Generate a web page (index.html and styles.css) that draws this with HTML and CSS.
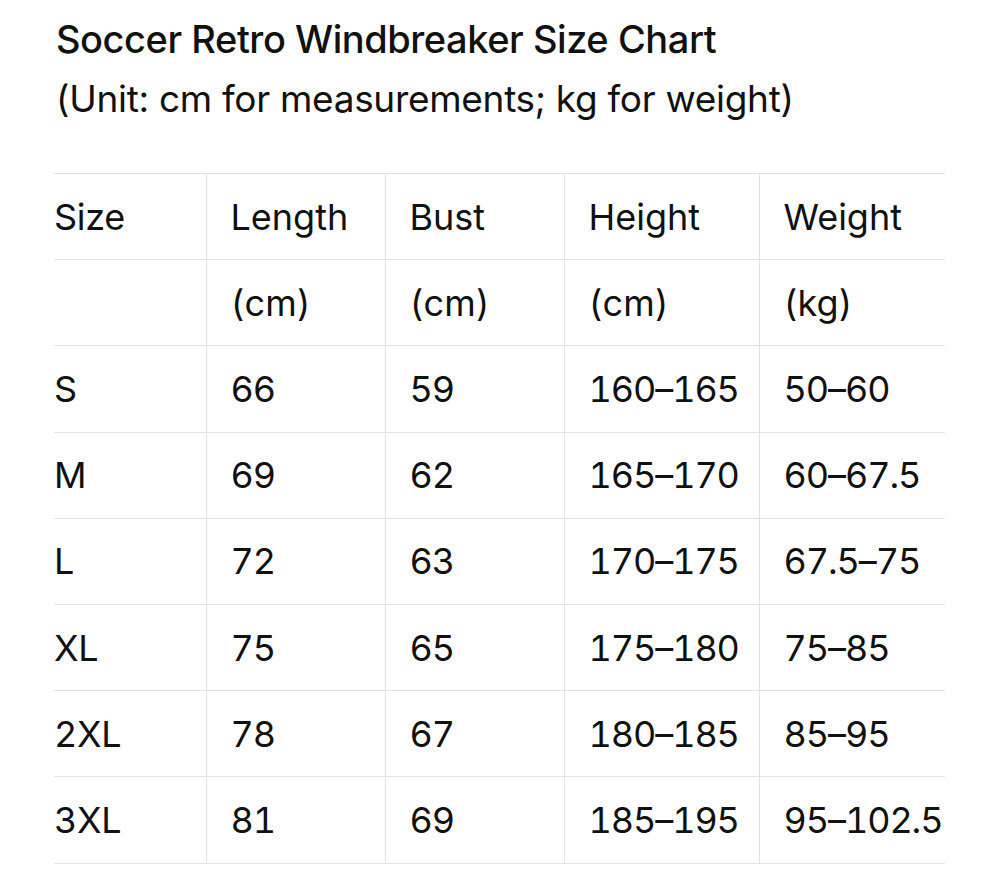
FILE: index.html
```html
<!DOCTYPE html>
<html>
<head>
<meta charset="utf-8">
<link rel="stylesheet" href="styles.css">
</head>
<body>
<div class="page">
  <h1 class="title">Soccer Retro Windbreaker Size Chart</h1>
  <p class="subtitle">(Unit: cm for measurements; kg for weight)</p>
  <table class="chart">
    <colgroup>
      <col class="c1"><col class="c2"><col class="c3"><col class="c4"><col class="c5">
    </colgroup>
    <thead>
      <tr><th>Size</th><th>Length</th><th>Bust</th><th>Height</th><th>Weight</th></tr>
      <tr><th></th><th>(cm)</th><th>(cm)</th><th>(cm)</th><th>(kg)</th></tr>
    </thead>
    <tbody>
      <tr><td>S</td><td>66</td><td>59</td><td>160–165</td><td>50–60</td></tr>
      <tr><td>M</td><td>69</td><td>62</td><td>165–170</td><td>60–67.5</td></tr>
      <tr><td>L</td><td>72</td><td>63</td><td>170–175</td><td>67.5–75</td></tr>
      <tr><td>XL</td><td>75</td><td>65</td><td>175–180</td><td>75–85</td></tr>
      <tr><td>2XL</td><td>78</td><td>67</td><td>180–185</td><td>85–95</td></tr>
      <tr><td>3XL</td><td>81</td><td>69</td><td>185–195</td><td>95–102.5</td></tr>
    </tbody>
  </table>
</div>
</body>
</html>
```

FILE: styles.css
```css
html, body {
  margin: 0;
  padding: 0;
  background: #ffffff;
}
.page {
  padding: 10px 0 0 54px;
  font-family: Inter, "Liberation Sans", sans-serif;
  color: #111111;
}
.title {
  margin: 0 0 0 2px;
  font-size: 38px;
  font-weight: 500;
  line-height: 59px;
  letter-spacing: -0.45px;
}
.subtitle {
  margin: 0 0 45px 2px;
  font-size: 37px;
  font-weight: 400;
  line-height: 59px;
  letter-spacing: -0.3px;
}
.chart {
  border-collapse: collapse;
  table-layout: fixed;
  width: 891px;
  font-size: 36px;
  letter-spacing: 0;
  font-variant-numeric: tabular-nums;
}
.c1 { width: 152px; }
.c2 { width: 179px; }
.c3 { width: 179px; }
.c4 { width: 195px; }
.c5 { width: 186px; }
.chart tr {
  height: 86.2px;
}
.chart th,
.chart td {
  border-top: 1.5px solid #e2e2e2;
  border-bottom: 1.5px solid #e2e2e2;
  border-left: 1.5px solid #e2e2e2;
  padding: 0 0 0 24px;
  text-align: left;
  font-weight: 400;
  vertical-align: middle;
  white-space: nowrap;
}
.chart td {
  letter-spacing: -1.1px;
}
.chart th:first-child,
.chart td:first-child {
  border-left: none;
  padding-left: 0;
  letter-spacing: -0.3px;
}
```
